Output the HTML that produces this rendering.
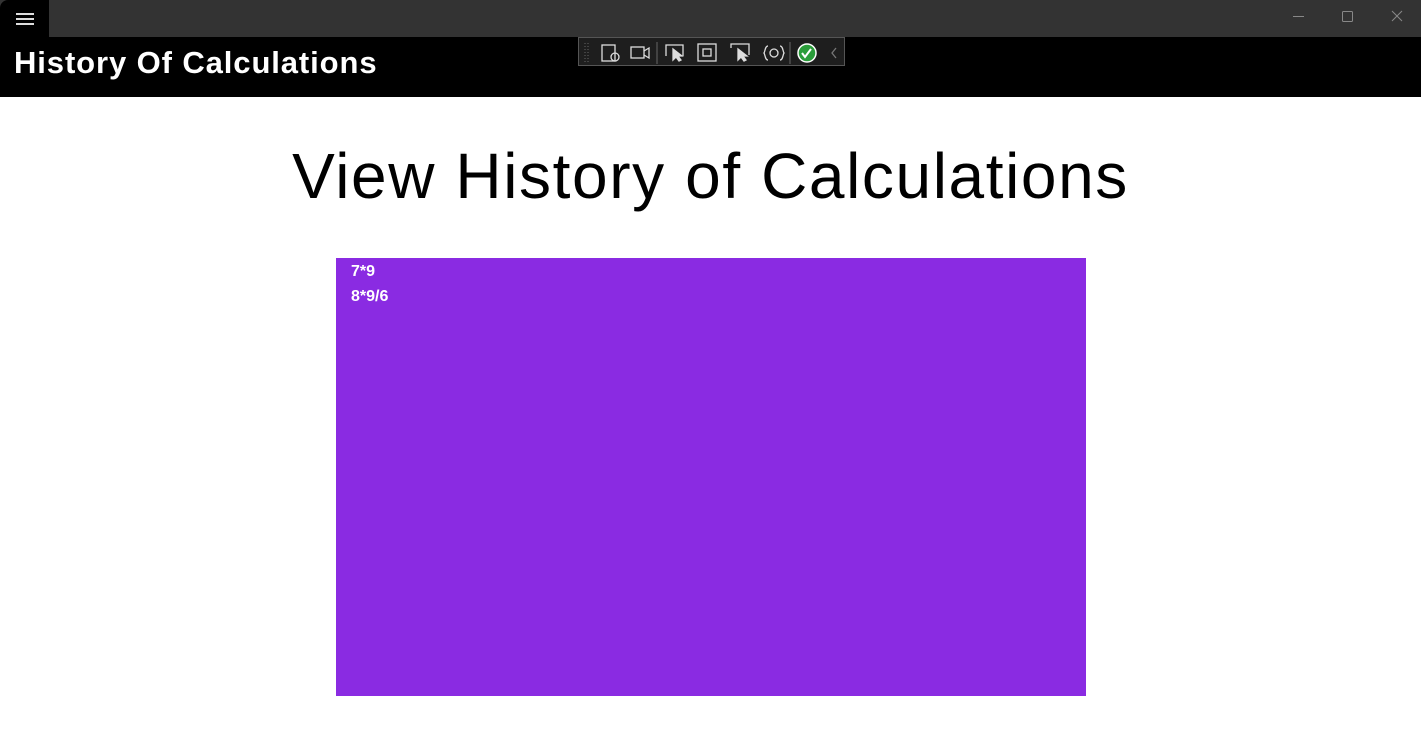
<!DOCTYPE html>
<html><head><meta charset="utf-8"><style>
*{margin:0;padding:0;box-sizing:border-box}
html,body{width:1421px;height:730px;overflow:hidden;background:#fff;font-family:"Liberation Sans","DejaVu Sans",sans-serif}
#tb{position:absolute;left:0;top:0;width:1421px;height:37px;background:#333}
#ham{position:absolute;left:0;top:0;width:49px;height:37px;background:#000;border-top-left-radius:8px}
#ham i{position:absolute;left:16px;width:18px;height:1.5px;background:#ddd}
#hdr{position:absolute;left:0;top:37px;width:1421px;height:60px;background:#000}
#hdr h1{position:absolute;left:14px;top:8px;color:#fff;font-size:31px;font-weight:bold;letter-spacing:0.9px}
#tool{position:absolute;left:578px;top:37px;width:267px;height:29px;background:#1e1e1e;border:1px solid #555}
#h2{position:absolute;left:0;width:1421px;top:139px;text-align:center;font-size:64px;color:#000;letter-spacing:1.6px}
#box{position:absolute;left:336px;top:258px;width:750px;height:438px;background:#8a2be2;color:#fff;font-weight:bold;font-size:16px;padding:1px 0 0 15px;line-height:25px}
</style></head><body>
<div id="tb">
 <div id="ham"><i style="top:13px"></i><i style="top:18px"></i><i style="top:23px"></i></div>
 <svg style="position:absolute;left:1290px;top:8px" width="120" height="18" fill="none" stroke="#888" stroke-width="1">
  <line x1="3" y1="8.5" x2="14" y2="8.5"/>
  <rect x="52.5" y="3.5" width="10" height="10" rx="1"/>
  <line x1="102" y1="3" x2="112" y2="13"/><line x1="112" y1="3" x2="102" y2="13"/>
 </svg>
</div>
<div id="hdr"><h1>History Of Calculations</h1></div>
<div id="tool">
 <svg width="267" height="29" fill="none" stroke="#ddd" stroke-width="1.3">
  <g stroke="#555" stroke-dasharray="1 2"><line x1="6" y1="5" x2="6" y2="25"/><line x1="9" y1="5" x2="9" y2="25"/></g>
  <rect x="23" y="7" width="13" height="16"/><circle cx="36" cy="19" r="4"/>
  <rect x="52" y="9" width="13" height="11"/><path d="M65 13l5-3v10l-5-3"/>
  <line x1="78" y1="4" x2="78" y2="26" stroke="#555"/>
  <path d="M87 18V7h17v11"/><path d="M94 11l0 11 3-3 3 4 2-1-3-4h4z" fill="#ddd"/>
  <rect x="119" y="6" width="18" height="17"/><rect x="124" y="11" width="8" height="7"/>
  <path d="M152 10V6h18v11"/><path d="M159 11l0 11 3-3 3 4 2-1-3-4h4z" fill="#ddd"/>
  <path d="M189 8c-3 0-3 6-4 7 1 1 1 7 4 7M201 8c3 0 3 6 4 7-1 1-1 7-4 7"/><circle cx="195" cy="15" r="4"/>
  <line x1="211" y1="4" x2="211" y2="26" stroke="#555"/>
  <circle cx="228" cy="15" r="9" fill="#2a9d3a" stroke="#fff" stroke-width="1.5"/><path d="M223 15l3 4 6-8" stroke="#fff" stroke-width="2"/>
  <path d="M257 10l-4 5 4 5" stroke="#777"/>
 </svg>
</div>
<div id="h2">View History of Calculations</div>
<div id="box">7*9<br>8*9/6</div>
</body></html>
